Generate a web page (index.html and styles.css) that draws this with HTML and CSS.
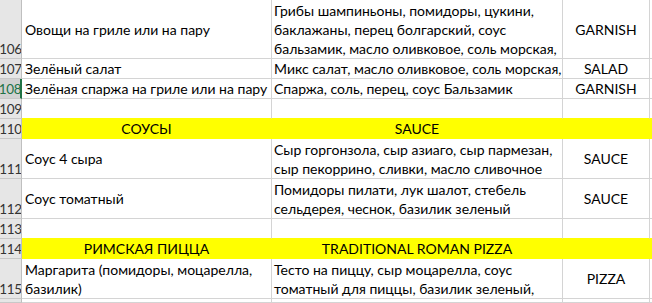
FILE: index.html
```html
<!DOCTYPE html>
<html lang="ru">
<head>
<meta charset="utf-8">
<title>Меню</title>
<link rel="stylesheet" href="styles.css">
</head>
<body>
<div class="sheet">
  <!-- 106 -->
  <div class="rh">106</div>
  <div class="c a">Овощи на гриле или на пару</div>
  <div class="c b">Грибы шампиньоны, помидоры, цукини,<br>баклажаны, перец болгарский, соус<br>бальзамик, масло оливковое, соль морская,</div>
  <div class="c m">GARNISH</div>
  <div class="c e"></div>
  <!-- 107 -->
  <div class="rh">107</div>
  <div class="c a">Зелёный салат</div>
  <div class="c b">Микс салат, масло оливковое, соль морская,</div>
  <div class="c m">SALAD</div>
  <div class="c e"></div>
  <!-- 108 -->
  <div class="rh sel">108</div>
  <div class="c a">Зелёная спаржа на гриле или на пару</div>
  <div class="c b">Спаржа, соль, перец, соус Бальзамик</div>
  <div class="c m">GARNISH</div>
  <div class="c e"></div>
  <!-- 109 -->
  <div class="rh">109</div>
  <div class="c pre"></div>
  <div class="c pre"></div>
  <div class="c pre"></div>
  <div class="c pre e"></div>
  <!-- 110 -->
  <div class="rh">110</div>
  <div class="c y m">СОУСЫ</div>
  <div class="c y m">SAUCE</div>
  <div class="c y"></div>
  <div class="c y e"></div>
  <!-- 111 -->
  <div class="rh">111</div>
  <div class="c a">Соус 4 сыра</div>
  <div class="c b">Сыр горгонзола, сыр азиаго, сыр пармезан,<br>сыр пекоррино, сливки, масло сливочное</div>
  <div class="c m">SAUCE</div>
  <div class="c e"></div>
  <!-- 112 -->
  <div class="rh">112</div>
  <div class="c a">Соус томатный</div>
  <div class="c b">Помидоры пилати, лук шалот, стебель<br>сельдерея, чеснок, базилик зеленый</div>
  <div class="c m">SAUCE</div>
  <div class="c e"></div>
  <!-- 113 -->
  <div class="rh">113</div>
  <div class="c pre"></div>
  <div class="c pre"></div>
  <div class="c pre"></div>
  <div class="c pre e"></div>
  <!-- 114 -->
  <div class="rh">114</div>
  <div class="c y m">РИМСКАЯ ПИЦЦА</div>
  <div class="c y m">TRADITIONAL ROMAN PIZZA</div>
  <div class="c y"></div>
  <div class="c y e"></div>
  <!-- 115 -->
  <div class="rh">115</div>
  <div class="c a">Маргарита (помидоры, моцарелла,<br>базилик)</div>
  <div class="c b">Тесто на пиццу, сыр моцарелла, соус<br>томатный для пиццы, базилик зеленый,</div>
  <div class="c m">PIZZA</div>
  <div class="c e"></div>
  <!-- 116 (only the top edge is in view) -->
  <div class="rh"></div>
  <div class="c"></div>
  <div class="c"></div>
  <div class="c"></div>
  <div class="c e"></div>
</div>
</body>
</html>
```
FILE: styles.css
```css
html, body {
  margin: 0;
  padding: 0;
  background: #ffffff;
}
body {
  width: 652px;
  height: 303px;
  overflow: hidden;
  font-family: "Lato", "Liberation Sans", sans-serif;
  font-size: 14px;
  color: #000000;
}
.sheet {
  display: grid;
  grid-template-columns: 22px 250px 291px 87px 1fr;
  grid-template-rows: 59px 20px 20px 20px 20px 40px 40px 20px 20px 40px 4px;
  height: 303px;
  overflow: hidden;
}
.rh {
  background: #e6e6e6;
  border-right: 1px solid #bfbfbf;
  border-bottom: 1px solid #c8c8c8;
  color: #333333;
  font-size: 13.5px;
  line-height: 17px;
  display: flex;
  align-items: flex-end;
  justify-content: center;
  overflow: hidden;
  letter-spacing: -0.3px;
}
.rh.sel {
  background: #d2d2d2;
  color: #217346;
  border-right: 2px solid #217346;
}
.c {
  border-right: 1px solid #d4d4d4;
  border-bottom: 1px solid #d4d4d4;
  overflow: hidden;
  white-space: nowrap;
  line-height: 19px;
  display: flex;
  align-items: center;
  padding: 0 3px;
  min-width: 0;
}
.e {
  border-right: none;
}
.b {
  padding-left: 2px;
}
.m {
  justify-content: center;
  text-align: center;
}
.pre {
  border-bottom-color: #ffff00;
}
.y {
  background: #ffff00;
  border-color: #ffff00;
}
```
